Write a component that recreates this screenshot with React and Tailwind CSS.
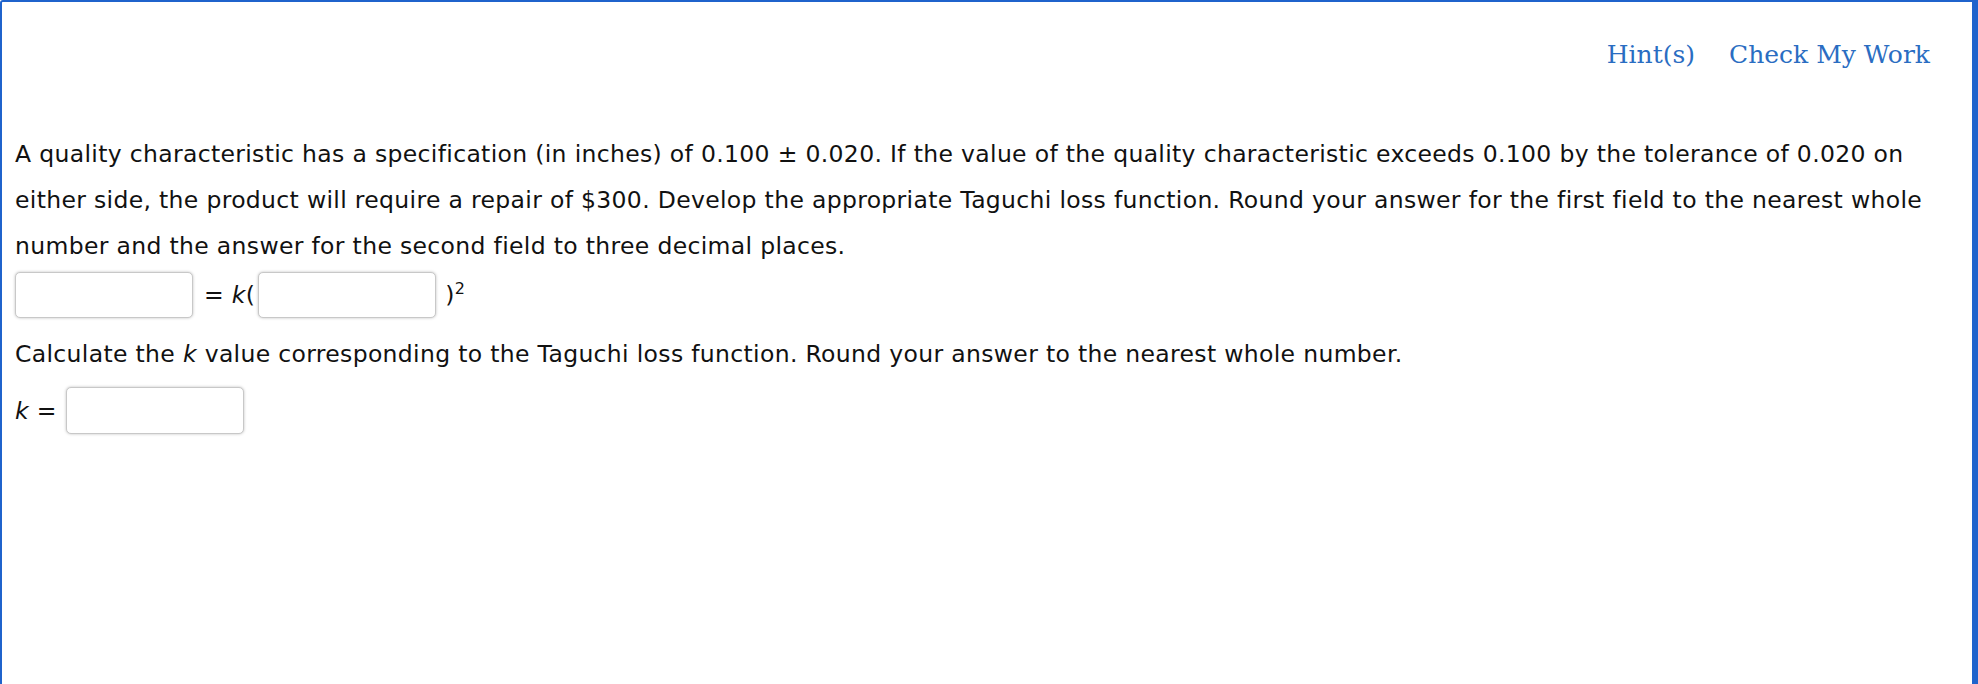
const Field = ({ className = "" }) => (
  <input
    type="text"
    className={`h-[46px] w-[178px] rounded-[5px] border border-[#c8c8c8] bg-white shadow-[0_0_3px_rgba(0,0,0,0.25)] outline-none ${className}`}
  />
);

export default function App() {
  return (
    <div className="h-[684px] w-full overflow-hidden bg-white">
      <div className="h-[700px] border-t-2 border-l-2 border-r-[6px] border-[#1f63cc] rounded-tl-[3px]">
        {/* header links */}
        <div className="flex justify-end gap-[34px] pr-[42px] pt-[35px] font-['DejaVu_Serif',Georgia,serif] text-[25px] leading-[36px] text-[#2a6dc2]">
          <a href="#" className="hover:underline">Hint(s)</a>
          <a href="#" className="hover:underline">Check My Work</a>
        </div>

        <div className="px-[13px] pt-[58px] font-['DejaVu_Sans',Verdana,sans-serif] text-[23.5px] leading-[46px] tracking-[0.33px] text-[#111]">
          <p>
            A quality characteristic has a specification (in inches) of 0.100 ± 0.020. If the value of the quality characteristic exceeds 0.100 by the tolerance of 0.020 on either side, the product will require a repair of $300. Develop the appropriate Taguchi loss function. Round your answer for the first field to the nearest whole number and the answer for the second field to three decimal places.
          </p>

          <div className="mt-[3px] flex h-[46px] items-center">
            <Field />
            <span className="ml-[11px] mr-[3px]">
              = <i>k</i>(
            </span>
            <Field />
            <span className="ml-[9px]">
              )<sup className="relative -top-[9px] text-[16px]">2</sup>
            </span>
          </div>

          <p className="mt-[13px]">
            Calculate the <i>k</i> value corresponding to the Taguchi loss function. Round your answer to the nearest whole number.
          </p>

          <div className="mt-[10px] flex h-[47px] items-center">
            <span className="mr-[9px]">
              <i>k</i> =
            </span>
            <Field className="h-[47px] w-[176px]" />
          </div>
        </div>
      </div>
    </div>
  );
}
